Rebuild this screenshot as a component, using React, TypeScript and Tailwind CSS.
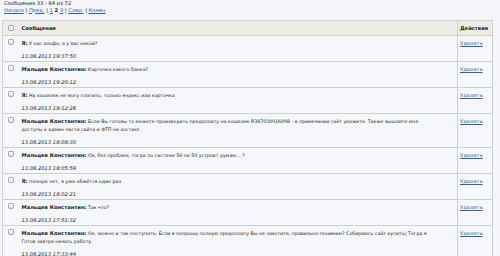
import React from "react";

type Row = { author: string; lines: string[]; date: string };

const rows: Row[] = [
  { author: "Я", lines: ["У нас альфа, а у вас какой?"], date: "13.08.2013 19:37:50" },
  { author: "Мальцев Константин", lines: ["Карточка какого банка?"], date: "13.08.2013 19:20:12" },
  { author: "Я", lines: ["На кошелек не могу платить, только яндекс или карточка"], date: "13.08.2013 19:12:26" },
  {
    author: "Мальцев Константин",
    lines: [
      "Если Вы готовы то можете производить предоплату на кошелек R387030916098 - в примечании сайт укажите. Также вышлите мне",
      "доступы к админ части сайта и ФТП на хостинг.",
    ],
    date: "13.08.2013 18:08:30",
  },
  { author: "Мальцев Константин", lines: ["Ок, без проблем, тогда по системе 50 на 50 устроит думаю... ?"], date: "13.08.2013 18:05:59" },
  { author: "Я", lines: ["полную нет, я уже обжёгся один раз"], date: "13.08.2013 18:02:21" },
  { author: "Мальцев Константин", lines: ["Так что?"], date: "13.08.2013 17:51:32" },
  {
    author: "Мальцев Константин",
    lines: [
      "Ок, можно и так поступить. Если я попрошу полную предоплату Вы не захотите, правильно понимаю? Собираюсь сайт купить) Тогда я",
      "Готов завтра начать работу.",
    ],
    date: "13.08.2013 17:33:44",
  },
];

function Box() {
  return (
    <span className="inline-block w-[6px] h-[6px] rounded-[1.5px] border border-[#a0a0a0] bg-gradient-to-b from-white to-[#e4e4e4] align-middle" />
  );
}

export default function App() {
  return (
    <div className="min-h-screen w-[500px] bg-[#f4f5f8] text-[#222] font-['DejaVu_Sans',Verdana,sans-serif] text-[5.2px] leading-[6.5px]">
      <div className="pl-[4px]">Сообщения 33 - 64 из 72</div>
      <div className="pl-[4px]">
        <a className="text-[#2f5fa8] underline">Начало</a> | <a className="text-[#2f5fa8] underline">Пред.</a> |{" "}
        <a className="text-[#2f5fa8] underline">1</a> <b>2</b> <a className="text-[#2f5fa8] underline">3</a> |{" "}
        <a className="text-[#2f5fa8] underline">След.</a> | <a className="text-[#2f5fa8] underline">Конец</a>
      </div>
      <table className="ml-[2px] mt-[7px] w-[491px] border border-[#d0d0d0] table-fixed">
        <colgroup>
          <col className="w-[16px]" />
          <col />
          <col className="w-[35px]" />
        </colgroup>
        <thead>
          <tr className="bg-[#eeece4] h-[15px] border-b border-[#d0d0d0]">
            <th className="p-0 text-center align-middle">
              <Box />
            </th>
            <th className="pl-[3px] text-left font-bold align-middle">Сообщение</th>
            <th className="pl-[2px] text-left font-bold align-middle border-l border-[#d0d0d0]">Действия</th>
          </tr>
        </thead>
        <tbody>
          {rows.map((r, i) => (
            <tr key={i} className="border-b border-[#d0d0d0] bg-[#f6f7fa]">
              <td className="p-0 pt-[2px] align-top text-center">
                <Box />
              </td>
              <td className="pl-[3px] pt-[2.5px] pb-[1.5px] align-top overflow-hidden">
                {r.lines.map((l, j) => (
                  <div key={j} className="leading-[8px] whitespace-nowrap text-[4.7px]">
                    {j === 0 && <b className="text-[5.2px]">{r.author}:</b>} {l}
                  </div>
                ))}
                <div className="italic leading-[8px] mt-[4px]">{r.date}</div>
              </td>
              <td className="pl-[2px] pt-[2.5px] align-top border-l border-[#d0d0d0]">
                <a className="text-[#2f5fa8] underline leading-[8px]">Удалить</a>
              </td>
            </tr>
          ))}
        </tbody>
      </table>
    </div>
  );
}
